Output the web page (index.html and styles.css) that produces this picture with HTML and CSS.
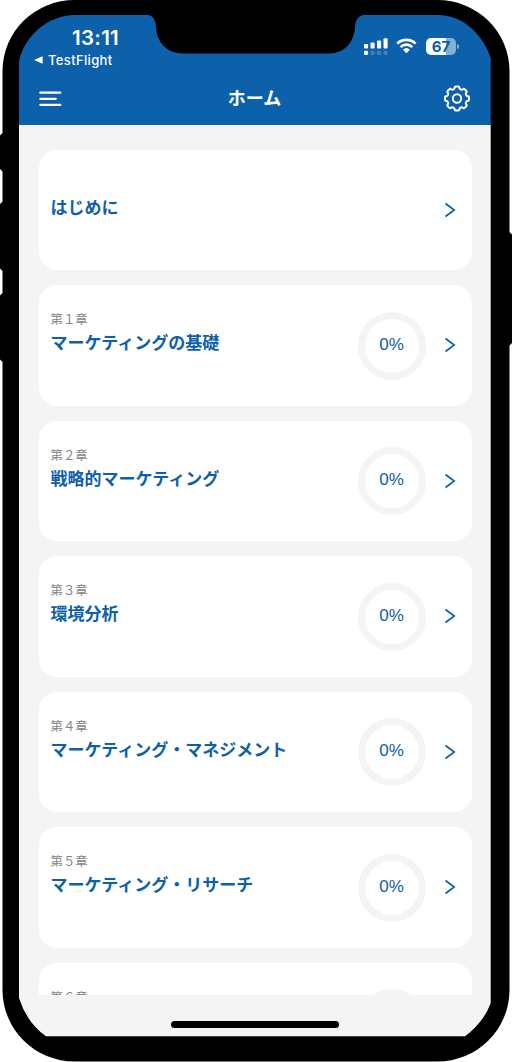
FILE: index.html
```html
<!DOCTYPE html>
<html lang="ja">
<head>
<meta charset="utf-8">
<title>ホーム</title>
<link rel="stylesheet" href="styles.css">
</head>
<body>
<div class="phone">
  <div class="screen">
    <header class="header">
      <div class="status">
        <div class="status-left">
          <div class="time">13:11</div>
          <div class="back"><svg width="9" height="8" viewBox="0 0 9 8"><path d="M0 4 8.6.2v7.6z" fill="#fff"/></svg>TestFlight</div>
        </div>
        <div class="status-right">
          <svg width="25" height="18" viewBox="0 0 25 18" fill="#fff">
            <rect x="0" y="6" width="4.1" height="4.6" rx="1"/><rect x="6.5" y="4.6" width="4.1" height="6" rx="1"/><rect x="13" y="2.5" width="4.1" height="8.100" rx="1"/><rect x="19.5" y="0.3" width="4.1" height="10.300" rx="1"/>
            <rect x="0" y="12.7" width="4.1" height="4.3" rx="1.3"/><g opacity=".2"><rect x="6.5" y="12.7" width="4.1" height="4.3" rx="1.3"/><rect x="13" y="12.7" width="4.1" height="4.3" rx="1.3"/><rect x="19.5" y="12.7" width="4.1" height="4.3" rx="1.3"/></g>
          </svg>
          <svg class="wifi" width="21" height="16" viewBox="0 0 21 16">
            <g fill="none" stroke="#fff" stroke-width="2.7"><path d="M1.2 5.6a13.2 13.2 0 0 1 18.4 0"/><path d="M4.5 9.1a8.5 8.5 0 0 1 11.8 0"/></g>
            <path d="M7 11.7a5 5 0 0 1 6.8 0l-3.400 3.500z" fill="#fff"/>
          </svg>
          <div class="battery"><span>67</span></div>
          <i class="battery-tip"></i>
        </div>
      </div>
      <div class="navbar">
        <svg width="23" height="16" viewBox="0 0 23 16" stroke="#fff" stroke-width="2.2" stroke-linecap="round"><path d="M1.3 1.7h20M1.3 7.8h15.5M1.3 13.8h20"/></svg>
        <h1>ホーム</h1>
        <svg width="28" height="28" viewBox="-14 -14 28 28" fill="none" stroke="#fff" stroke-width="2" stroke-linejoin="round">
          <circle cy="-.5" r="4.2"/>
          <path id="gear" transform="translate(0 -.5)" d=""/>
        </svg>
      </div>
    </header>
    <main class="list" id="list"></main>
    <footer class="home"><i></i></footer>
  </div>
  <svg class="frame" width="512" height="1062" viewBox="0 0 512 1062">
    <path d="M0 135.500L2.500 133V71A72 71 0 0 1 74.500 0H437.500A72 71 0 0 1 509.500 71V232L512 234.500V343L509.500 345.500V990A72 71.500 0 0 1 437.500 1061.500H74.500A72 71.500 0 0 1 2.500 990V362L0 359.500V295.500L2.500 293V271L0 268.500V204L2.500 201.500V171.500L0 169Z
      M19 62V998Q27 1023 46 1036.300H465Q484 1022 490.700 1003V58C484 37 465 15 438 15H363Q355.500 17 355 27C354 42 345 53.500 329 53.500H183C167 53.500 156.500 42 156 27Q155.500 17 149 15H75C47 15 23 38 19 62Z" fill="#000" fill-rule="evenodd"/>
  </svg>
</div>
<script src="app.js"></script>
</body>
</html>
```

FILE: styles.css
```css
* { box-sizing: border-box; }
body {
  margin: 0;
  background: #fff;
  font-family: Inter, "Noto Sans CJK JP", sans-serif;
  color: #0d60aa;
}
.phone {
  position: relative;
  width: 512px;
  height: 1062px;
  padding: 15px 21px 25px 19px;
  overflow: hidden;
}
.frame { position: absolute; inset: 0; }
.screen {
  height: 1022px;
  display: flex;
  flex-direction: column;
  overflow: hidden;
  border-radius: 40px;
  background: #f4f4f4;
}
.header {
  flex: none;
  height: 110.4px;
  background: #0d60aa;
  color: #fff;
}
.status {
  height: 57px;
  display: flex;
  justify-content: space-between;
  padding: 10px 32px 0 15px;
}
.time {
  padding-left: 38px;
  font-size: 20.5px;
  font-weight: 600;
  line-height: 25px;
  letter-spacing: .3px;
}
.back {
  display: flex;
  align-items: center;
  gap: 5px;
  font-size: 13px;
  font-weight: 500;
  line-height: 20px;
  letter-spacing: .35px;
}
.status-right {
  display: flex;
  align-items: flex-start;
  padding-top: 13px;
}
.wifi { margin-left: 7px; }
.battery {
  width: 30px;
  height: 17px;
  margin-left: 9px;
  border-radius: 5px;
  background: linear-gradient(90deg, #fff 67%, #86afd4 67%);
  color: #0d60aa;
  font-size: 15px;
  font-weight: 700;
  line-height: 17px;
  text-align: center;
}
.battery-tip {
  width: 2px;
  height: 5px;
  margin: 6px 0 0 1px;
  border-radius: 0 2px 2px 0;
  background: #86afd4;
}
.navbar {
  height: 53px;
  display: flex;
  align-items: center;
  justify-content: space-between;
  padding: 0 20px;
}
.navbar h1 {
  margin: 0 0 0 4px;
  font-size: 18px;
  font-weight: 600;
  line-height: 24px;
  padding-top: 1px;
}
.list {
  flex: 1;
  min-height: 0;
  overflow: hidden;
  display: flex;
  flex-direction: column;
  gap: 15px;
  padding: 24.400px 19.500px 0;
}
.card {
  flex: none;
  height: 120.5px;
  display: flex;
  align-items: center;
  padding: 0 16px 0 12px;
  border-radius: 18px;
  background: #fff;
}
.label { flex: 1; }
.label small {
  display: block;
  color: #858585;
  font-size: 12.4px;
  line-height: 18px;
}
.label h2 {
  margin: 0;
  font-size: 17px;
  font-weight: 600;
  line-height: 24px;
  padding-bottom: 5px;
  white-space: nowrap;
}
.label small + h2 { padding: 2px 0 25px; }
.ring {
  width: 68px;
  height: 68px;
  margin-right: 18px;
  border: 7px solid #f4f4f4;
  border-radius: 50%;
  font-family: "Liberation Sans", sans-serif;
  font-size: 17px;
  line-height: 51px;
  text-align: center;
}
.home {
  flex: none;
  height: 42px;
  display: flex;
  justify-content: center;
  padding-top: 26px;
}
.home i {
  width: 168px;
  height: 6.500px;
  border-radius: 4px;
  background: #000;
}
```

FILE: app.js
```js
const chapters = [
  ["", "はじめに"],
  ["第１章", "マーケティングの基礎"],
  ["第２章", "戦略的マーケティング"],
  ["第３章", "環境分析"],
  ["第４章", "マーケティング・マネジメント"],
  ["第５章", "マーケティング・リサーチ"],
  ["第６章", ""]
];
const chevron = '<svg width="12" height="17" viewBox="0 0 12 17"><path d="M1.500 1.500 10.200 8 1.500 14.500" fill="none" stroke="#0d60aa" stroke-width="1.700"/></svg>';
document.getElementById("list").innerHTML = chapters.map(([chapter, title]) =>
  `<section class="card"><div class="label">${chapter ? `<small>${chapter}</small>` : ""}<h2>${title || "&nbsp;"}</h2></div>${chapter ? `<div class="ring">${title ? "0%" : ""}</div>` : ""}${chevron}</section>`
).join("");

// Eight rounded teeth around the gear hub
let outline = "";
for (let i = 0; i <= 160; i++) {
  const a = i * Math.PI / 80;
  const r = 10.9 + 1.1 * Math.tanh(3 * (Math.cos(8 * a) + 0.25));
  outline += (i ? "L" : "M") + (r * Math.cos(a)).toFixed(2) + " " + (r * Math.sin(a)).toFixed(2);
}
document.getElementById("gear").setAttribute("d", outline + "Z");
```
